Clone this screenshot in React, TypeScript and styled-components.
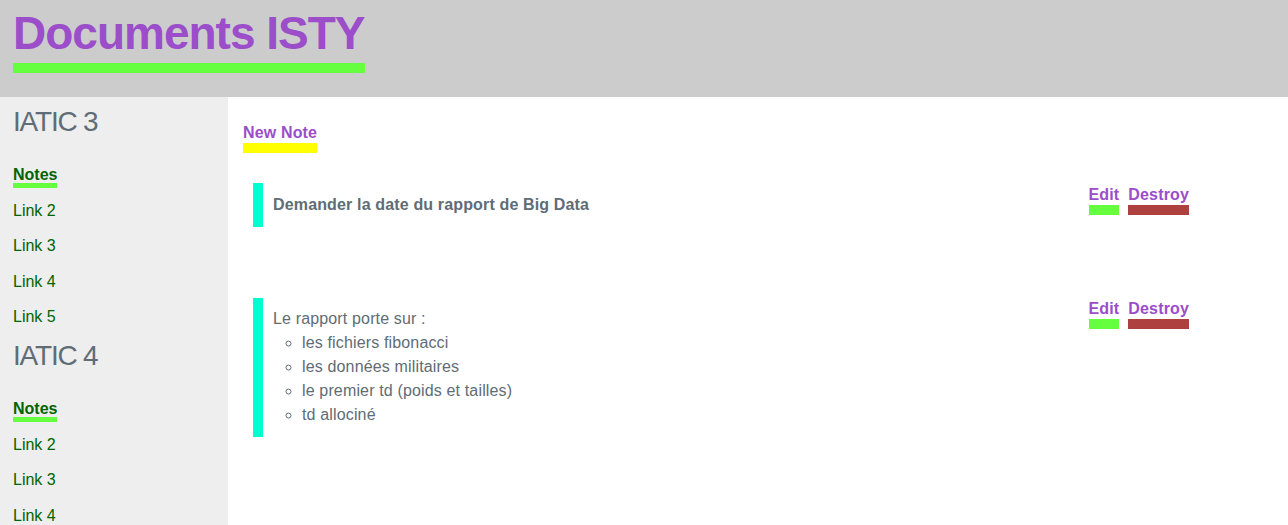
import React from 'react';
import styled, { createGlobalStyle } from 'styled-components';

const GlobalStyle = createGlobalStyle`
  html, body {
    margin: 0;
    padding: 0;
    background: #fff;
    font-family: 'Liberation Sans', Arial, sans-serif;
    font-size: 16px;
    color: #606c76;
  }
`;

const Header = styled.header`
  box-sizing: border-box;
  height: 97px;
  padding: 6px 13px 0;
  background: #cccccc;
`;

const Title = styled.h1`
  display: inline-block;
  margin: 0;
  padding-bottom: 2px;
  font-size: 46px;
  line-height: 55px;
  font-weight: bold;
  letter-spacing: -1px;
  color: #9b4dca;
  border-bottom: 10px solid #66ff40;
`;

const Layout = styled.div`
  display: flex;
  min-height: calc(100vh - 97px);
`;

const Sidebar = styled.nav`
  box-sizing: border-box;
  flex: 0 0 228px;
  padding: 7px 13px;
  background: #eeeeee;
`;

const SectionTitle = styled.h3`
  margin: 0 0 22px;
  font-size: 28px;
  line-height: 1.3;
  font-weight: normal;
  letter-spacing: -1.2px;
  color: #606c76;
`;

const LinkList = styled.ul`
  margin: 0 0 8px;
  padding: 0;
  list-style: none;
`;

const LinkItem = styled.li`
  line-height: 25.5px;
  & + & {
    margin-top: 10px;
  }
`;

const SideLink = styled.a<{ active?: boolean }>`
  color: #006400;
  text-decoration: none;
  font-weight: ${(p) => (p.active ? 'bold' : 'normal')};
  border-bottom: ${(p) => (p.active ? '5px solid #66ff40' : 'none')};
`;

const Main = styled.main`
  flex: 1;
  padding: 26px 15px 0;
  letter-spacing: 0.15px;
`;

const UnderLink = styled.a<{ bar: string }>`
  display: inline-block;
  font-weight: bold;
  font-size: 16px;
  line-height: 20px;
  color: #9b4dca;
  text-decoration: none;
  border-bottom: 10px solid ${(p) => p.bar};
`;

const NoteList = styled.div`
  margin-top: 30px;
`;

const NoteRow = styled.div`
  display: flex;
  align-items: flex-start;
  margin: 0 84px 71px 10px;
`;

const NoteBody = styled.div`
  flex: 1;
  padding: 9.5px 0 10px 10px;
  border-left: 10px solid #00ffd0;
  line-height: 24px;
`;

const NoteTitle = styled.strong`
  font-weight: bold;
`;

const SubList = styled.ul`
  margin: 0;
  padding-left: 29px;
  list-style: circle;
`;

const Actions = styled.div`
  display: flex;
  gap: 9px;
  margin-top: 1.5px;
`;

const sections = [
  { name: 'IATIC 3', links: ['Link 2', 'Link 3', 'Link 4', 'Link 5'] },
  { name: 'IATIC 4', links: ['Link 2', 'Link 3', 'Link 4', 'Link 5'] },
];

const NoteActions: React.FC = () => (
  <Actions>
    <UnderLink href="#" bar="#66ff40">Edit</UnderLink>
    <UnderLink href="#" bar="#ae4040">Destroy</UnderLink>
  </Actions>
);

const App: React.FC = () => {
  return (
    <>
      <GlobalStyle />
      <Header>
        <Title>Documents ISTY</Title>
      </Header>
      <Layout>
        <Sidebar>
          {sections.map((section) => (
            <div key={section.name}>
              <SectionTitle>{section.name}</SectionTitle>
              <LinkList>
                <LinkItem>
                  <SideLink href="#" active>Notes</SideLink>
                </LinkItem>
                {section.links.map((link) => (
                  <LinkItem key={link}>
                    <SideLink href="#">{link}</SideLink>
                  </LinkItem>
                ))}
              </LinkList>
            </div>
          ))}
        </Sidebar>
        <Main>
          <UnderLink href="#" bar="#ffff00">New Note</UnderLink>
          <NoteList>
            <NoteRow>
              <NoteBody>
                <NoteTitle>Demander la date du rapport de Big Data</NoteTitle>
              </NoteBody>
              <NoteActions />
            </NoteRow>
            <NoteRow>
              <NoteBody>
                Le rapport porte sur :
                <SubList>
                  <li>les fichiers fibonacci</li>
                  <li>les données militaires</li>
                  <li>le premier td (poids et tailles)</li>
                  <li>td allociné</li>
                </SubList>
              </NoteBody>
              <NoteActions />
            </NoteRow>
          </NoteList>
        </Main>
      </Layout>
    </>
  );
};

export default App;
